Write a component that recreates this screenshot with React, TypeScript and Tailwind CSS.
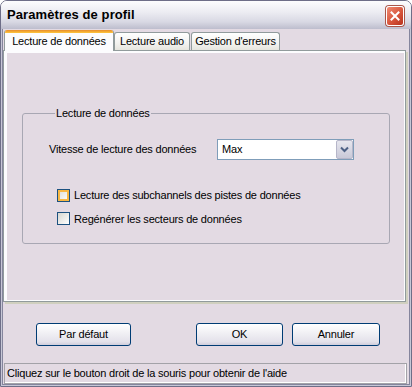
import React from 'react';

const Checkbox = ({ hover }: { hover?: boolean }) => (
  <span className="flex w-[13px] h-[13px] shrink-0 border border-[#1c5180] bg-[linear-gradient(135deg,#d6d6d0,#ffffff)]">
    {hover && <span className="flex-1 border-2 border-[#f8b844] bg-[linear-gradient(135deg,#e2e2dc,#fafaf8)]" />}
  </span>
);

const XpButton = ({ label, w, ml }: { label: string; w: string; ml: string }) => (
  <button
    className={`${w} ${ml} h-[23px] rounded-[3px] border border-[#003c74] bg-[linear-gradient(#ffffff,#f2f1f5_40%,#e3e1ea_85%,#cfcddb)] text-[11px] tracking-[-0.2px] text-black flex items-center justify-center`}
  >
    {label}
  </button>
);

export default function App() {
  return (
    <div className="w-[412px] h-[387px] bg-white font-['Liberation_Sans',Arial,sans-serif] text-black">
      <div className="w-full h-full flex flex-col border border-[#6e6e88] rounded-t-[7px] overflow-hidden">
        {/* title bar */}
        <div className="h-[28px] shrink-0 flex items-center justify-between pl-[6px] pr-[7px] bg-[linear-gradient(#fdfdfe,#ececf2_40%,#d8d8e3_75%,#bdbdcd)]">
          <span className="text-[13px] font-bold tracking-[0.1px]">Paramètres de profil</span>
          <span className="w-[18px] h-[20px] mt-[2px] rounded-[3px] border border-white bg-[linear-gradient(135deg,#f08b73,#d7553c_55%,#b8321d)] flex items-center justify-center shadow-[0_0_0_1px_#a9564a]">
            <svg width="10" height="10" viewBox="0 0 10 10">
              <path d="M1.5 1.5 L8.5 8.5 M8.5 1.5 L1.5 8.5" stroke="white" strokeWidth="2" strokeLinecap="square" />
            </svg>
          </span>
        </div>

        {/* body */}
        <div className="flex-1 flex flex-col border-x border-b border-[#c7c7d6]">
          <div className="flex-1 flex flex-col border-x border-b border-[#85859d] bg-[#e3dae3] pr-[1px] text-[11px] tracking-[-0.2px]">
            {/* tabs */}
            <div className="h-[20px] mt-[1px] flex items-end relative z-10">
              <div className="ml-[1px] w-[110px] h-[21px] -mb-[1px] flex flex-col rounded-t-[3px] border-x border-[#919b9c] bg-[#fcfcfe] overflow-hidden">
                <div className="h-[3px] bg-[linear-gradient(#e68b2c,#ffc73c)]" />
                <div className="flex-1 flex items-center justify-center pb-[2px]">Lecture de données</div>
              </div>
              <div className="w-[76px] h-[18px] flex items-center justify-center rounded-t-[3px] border-x border-t border-[#919b9c] bg-[linear-gradient(#ffffff,#f3f3f0_60%,#e6e5de)]">
                Lecture audio
              </div>
              <div className="ml-[1px] w-[89px] h-[18px] flex items-center justify-center rounded-t-[3px] border-x border-t border-[#919b9c] bg-[linear-gradient(#ffffff,#f3f3f0_60%,#e6e5de)]">
                Gestion d'erreurs
              </div>
            </div>

            {/* panel */}
            <div className="h-[252px] flex shadow-[2px_2px_0_#d0d0bf] mr-[2px] mb-[2px] border border-[#919b9c] bg-[#fcfcfe] pt-[2px] pl-[3px] pr-[1px] pb-[1px]">
              <div className="flex-1 bg-[#e3dae3] pt-[54px] pl-[15px] pr-[14px]">
                <fieldset className="border border-[#a8a7b3] rounded-[3px] h-[137px] px-[26px]">
                  <legend className="ml-[6px] px-[1px] leading-[13px]">Lecture de données</legend>
                  <div className="flex items-center mt-[19px]">
                    <span className="w-[168px]">Vitesse de lecture des données</span>
                    <div className="w-[137px] h-[21px] flex border border-[#7f9db9] bg-white">
                      <span className="flex-1 flex items-center pl-[4px]">Max</span>
                      <span className="w-[17px] flex items-center justify-center border border-[#b6b6c9] rounded-[2px] bg-[linear-gradient(#e6e6ee,#c9c9d8)]">
                        <svg width="9" height="7" viewBox="0 0 9 7">
                          <path d="M1 1.5 L4.5 5 L8 1.5" fill="none" stroke="#4d6185" strokeWidth="2" />
                        </svg>
                      </span>
                    </div>
                  </div>
                  <div className="flex items-center gap-[4px] ml-[8px] mt-[27px]">
                    <Checkbox hover />
                    <span>Lecture des subchannels des pistes de données</span>
                  </div>
                  <div className="flex items-center gap-[4px] ml-[8px] mt-[7px]">
                    <Checkbox />
                    <span>Regénérer les secteurs de données</span>
                  </div>
                </fieldset>
              </div>
            </div>

            {/* buttons */}
            <div className="flex mt-[19px]">
              <XpButton label="Par défaut" w="w-[95px]" ml="ml-[33px]" />
              <XpButton label="OK" w="w-[87px]" ml="ml-[65px]" />
              <XpButton label="Annuler" w="w-[88px]" ml="ml-[9px]" />
            </div>

            {/* status bar */}
            <div className="mt-auto ml-[1px] mr-[1px] h-[21px] flex items-center pl-[2px] border border-[#a3a2a8] shadow-[inset_-1px_-1px_0_#ffffff]">
              Cliquez sur le bouton droit de la souris pour obtenir de l'aide
            </div>
          </div>
        </div>
      </div>
    </div>
  );
}
